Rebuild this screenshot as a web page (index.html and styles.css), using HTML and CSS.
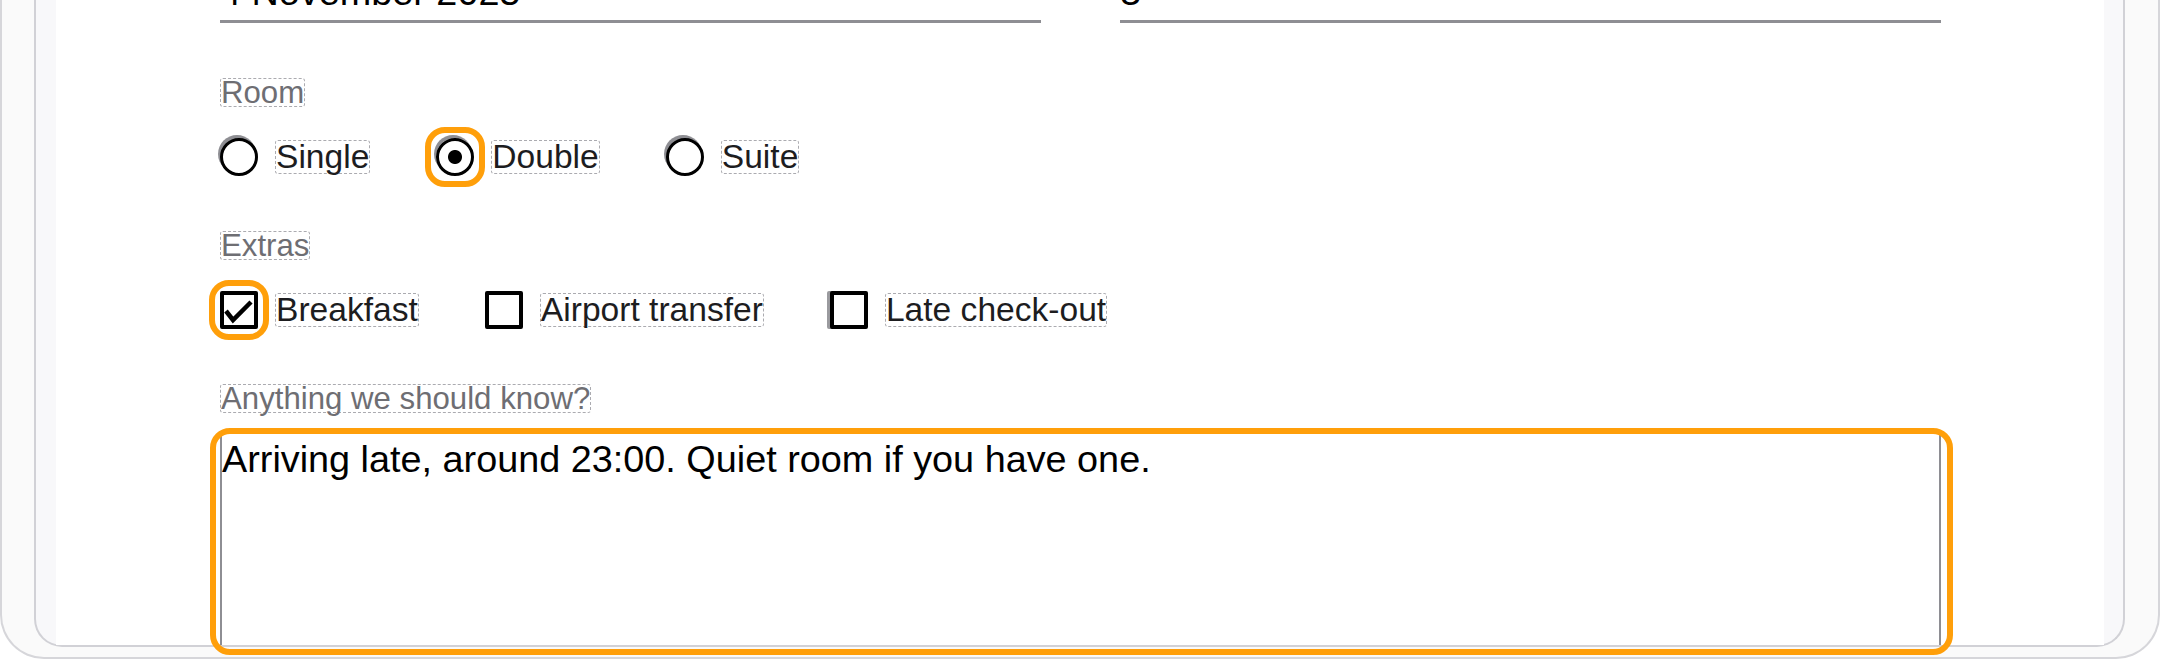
FILE: index.html
```html
<!DOCTYPE html>
<html lang="en">
<head>
  <meta charset="UTF-8">
  <title>Booking details</title>
  <link rel="stylesheet" href="styles.css">
</head>
<body>
  <!-- Device frame -->
  <div class="device">
    <div class="window">
      <main class="panel">
        <!-- Dates -->
        <div class="dates">
          <input class="line-input" type="text" value="4 November 2025">
          <input class="line-input" type="text" value="3">
        </div>

        <!-- Room type -->
        <div class="group">
          <span class="caption">Room</span>
          <div class="options">
            <label class="option">
              <input class="radio" type="radio" name="room">
              <span class="option-text">Single</span>
            </label>
            <label class="option">
              <span class="ring"><input class="radio" type="radio" name="room" checked></span>
              <span class="option-text">Double</span>
            </label>
            <label class="option">
              <input class="radio" type="radio" name="room">
              <span class="option-text">Suite</span>
            </label>
          </div>
        </div>

        <!-- Extras -->
        <div class="group">
          <span class="caption">Extras</span>
          <div class="options">
            <label class="option">
              <span class="check ring">
                <input class="checkbox" type="checkbox" checked>
                <svg class="tick" viewBox="0 0 38 38"><path d="M6 20 L13 29 L31 11"/></svg>
              </span>
              <span class="option-text">Breakfast</span>
            </label>
            <label class="option">
              <span class="check"><input class="checkbox" type="checkbox"></span>
              <span class="option-text">Airport transfer</span>
            </label>
            <label class="option">
              <span class="check"><input class="checkbox ghost" type="checkbox"></span>
              <span class="option-text">Late check-out</span>
            </label>
          </div>
        </div>

        <!-- Notes -->
        <div class="group">
          <span class="caption">Anything we should know?</span>
          <div class="note">
            <textarea class="note-input">Arriving late, around 23:00. Quiet room if you have one.</textarea>
          </div>
        </div>
      </main>
    </div>
  </div>
</body>
</html>
```

FILE: styles.css
```css
/* Basic reset */
* {
  box-sizing: border-box;
}
body {
  margin: 0;
  background: #fff;
  font-family: 'Liberation Sans', Arial, Helvetica, sans-serif;
  color: #1d1d1f;
  overflow: hidden;
}
/* Frames */
.device {
  border: 2px solid #d6d6da;
  border-top: 0;
  border-radius: 0 0 44px 44px;
  background: #fafafa;
  padding: 0 33px 10px 32px;
}
.window {
  border: 2px solid #d1d1d6;
  border-top: 0;
  border-radius: 0 0 28px 28px;
  background: #f8f8fa;
  padding: 0 19px 0 20px;
}
.panel {
  display: flex;
  flex-direction: column;
  background: #fff;
  padding: 0 163px 0 164px;
}
/* Date fields */
.dates {
  display: grid;
  grid-template-columns: 1fr 1fr;
  column-gap: 79px;
  margin-top: -40px;
}
.line-input {
  width: 100%;
  font: 37.8px/44px 'Liberation Sans', Arial, sans-serif;
  color: #000;
  padding: 10px 0 6px;
  border: none;
  border-bottom: 3px solid #8e8e93;
  background: transparent;
  outline: none;
}
/* Groups */
.group {
  display: flex;
  flex-direction: column;
  align-items: flex-start;
  margin-top: 55px;
}
.caption {
  font-size: 31.2px;
  line-height: 27px;
  color: #6e6e73;
  border: 1px dashed #ababb0;
  border-radius: 3px;
}
.options {
  display: flex;
  gap: 66px;
  margin-top: 31px;
}
.option {
  display: flex;
  align-items: center;
  gap: 17px;
}
.option-text {
  font-size: 33.6px;
  line-height: 32px;
  color: #1d1d1f;
  border: 1px dashed #ababb0;
  border-radius: 3px;
}
/* Controls */
.radio,
.checkbox {
  appearance: none;
  -webkit-appearance: none;
  display: block;
  width: 38px;
  height: 38px;
  margin: 0;
  background: #fff;
}
.radio {
  border: 3px solid #000;
  border-radius: 50%;
  box-shadow: -2px -3px 0 #8e8e93;
}
.radio:checked {
  background: radial-gradient(circle, #000 6.5px, #fff 7.5px);
}
.checkbox {
  border: 4px solid #000;
  border-radius: 2px;
}
.checkbox.ghost {
  box-shadow: -3px 0 0 #9a9a9e;
}
.check {
  position: relative;
  display: flex;
}
.tick {
  position: absolute;
  top: 0;
  left: 0;
  width: 38px;
  height: 38px;
  fill: none;
  stroke: #000;
  stroke-width: 4.5;
}
/* Focus rings */
.ring {
  position: relative;
  display: flex;
}
.ring::after {
  content: '';
  position: absolute;
  inset: -11px;
  border: 6px solid #ff9f0a;
  border-radius: 20px;
  pointer-events: none;
}
/* Notes */
.note {
  position: relative;
  align-self: stretch;
  margin-top: 22px;
}
.note::after {
  content: '';
  position: absolute;
  inset: -7px -12px -10px -10px;
  border: 6px solid #ff9f0a;
  border-radius: 20px;
  pointer-events: none;
}
.note-input {
  display: block;
  width: 100%;
  height: 210px;
  font: 37.8px/44px 'Liberation Sans', Arial, sans-serif;
  color: #000;
  padding: 2px 0 0;
  border: none;
  border-left: 2px solid #8e8e93;
  border-right: 2px solid #8e8e93;
  background: #fff;
  resize: none;
  outline: none;
}
```
